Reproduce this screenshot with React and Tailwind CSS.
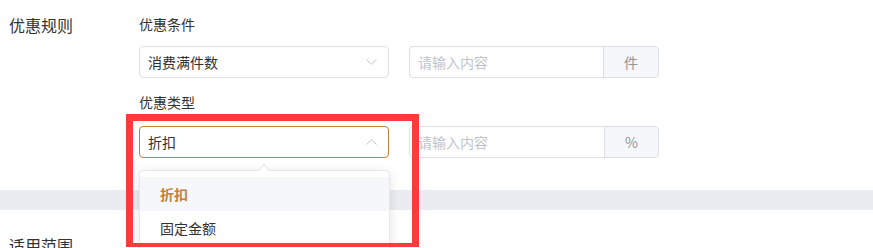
const Chevron = ({ up }) => (
  <svg width="11" height="6" viewBox="0 0 11 6" className="shrink-0">
    <polyline
      points={up ? '0.5,5.5 5.5,0.8 10.5,5.5' : '0.5,0.5 5.5,5.2 10.5,0.5'}
      fill="none"
      stroke="#c0c4cc"
      strokeWidth="1"
    />
  </svg>
)

const Select = ({ value, open }) => (
  <div
    className={`flex h-8 w-[250px] items-center justify-between rounded border bg-white pl-2 pr-[11px] text-sm text-[#303133] ${
      open ? 'border-[#c4813f]' : 'border-[#dcdfe6]'
    }`}
  >
    <span>{value}</span>
    <Chevron up={open} />
  </div>
)

const InputGroup = ({ unit }) => (
  <div className="flex h-8 w-[250px] rounded border border-[#dcdfe6] bg-white text-sm">
    <div className="flex flex-1 items-center pl-2 text-[#c0c4cc]">请输入内容</div>
    <div className="flex items-center rounded-r border-l border-[#dcdfe6] bg-[#f5f7fa] px-5 text-[#909399]">
      {unit}
    </div>
  </div>
)

export default function App() {
  return (
    <div className="relative h-[248px] w-[873px] overflow-hidden bg-white font-['Noto_Sans_CJK_SC',sans-serif] text-[#333]">
      <section className="flex pb-[32px]">
        <div className="w-[139px] pl-[9px] pt-[15px] text-base leading-5">优惠规则</div>
        <div className="pt-[14px]">
          <div className="text-sm leading-5">优惠条件</div>
          <div className="mt-3 flex gap-[20px]">
            <Select value="消费满件数" />
            <InputGroup unit="件" />
          </div>
          <div className="mt-[14px] text-sm leading-5">优惠类型</div>
          <div className="mt-[14px] flex gap-[20px]">
            <Select value="折扣" open />
            <InputGroup unit="%" />
          </div>
        </div>
      </section>

      <div className="h-5 bg-[#e9ecf0]" />

      <section className="pl-[9px] pt-[25px] text-base leading-5">适用范围</section>

      {/* dropdown */}
      <div className="absolute left-[139px] top-[170px] w-[251px] rounded border border-[#e4e7ed] bg-white py-[6px] text-sm shadow-[0_2px_12px_rgba(0,0,0,0.1)]">
        <span className="absolute left-[120px] top-[-5px] h-2 w-2 rotate-45 border-l border-t border-[#e4e7ed] bg-white" />
        <div className="flex h-[34px] items-center bg-[#f5f7fa] pl-5 font-bold text-[#c4803c]">折扣</div>
        <div className="flex h-[34px] items-center pl-5 text-[#303133]">固定金额</div>
      </div>

      {/* highlight box */}
      <div className="pointer-events-none absolute left-[126px] top-[114px] h-[133px] w-[293px] border-[7px] border-b-4 border-[#ff3a3a]" />
    </div>
  )
}
